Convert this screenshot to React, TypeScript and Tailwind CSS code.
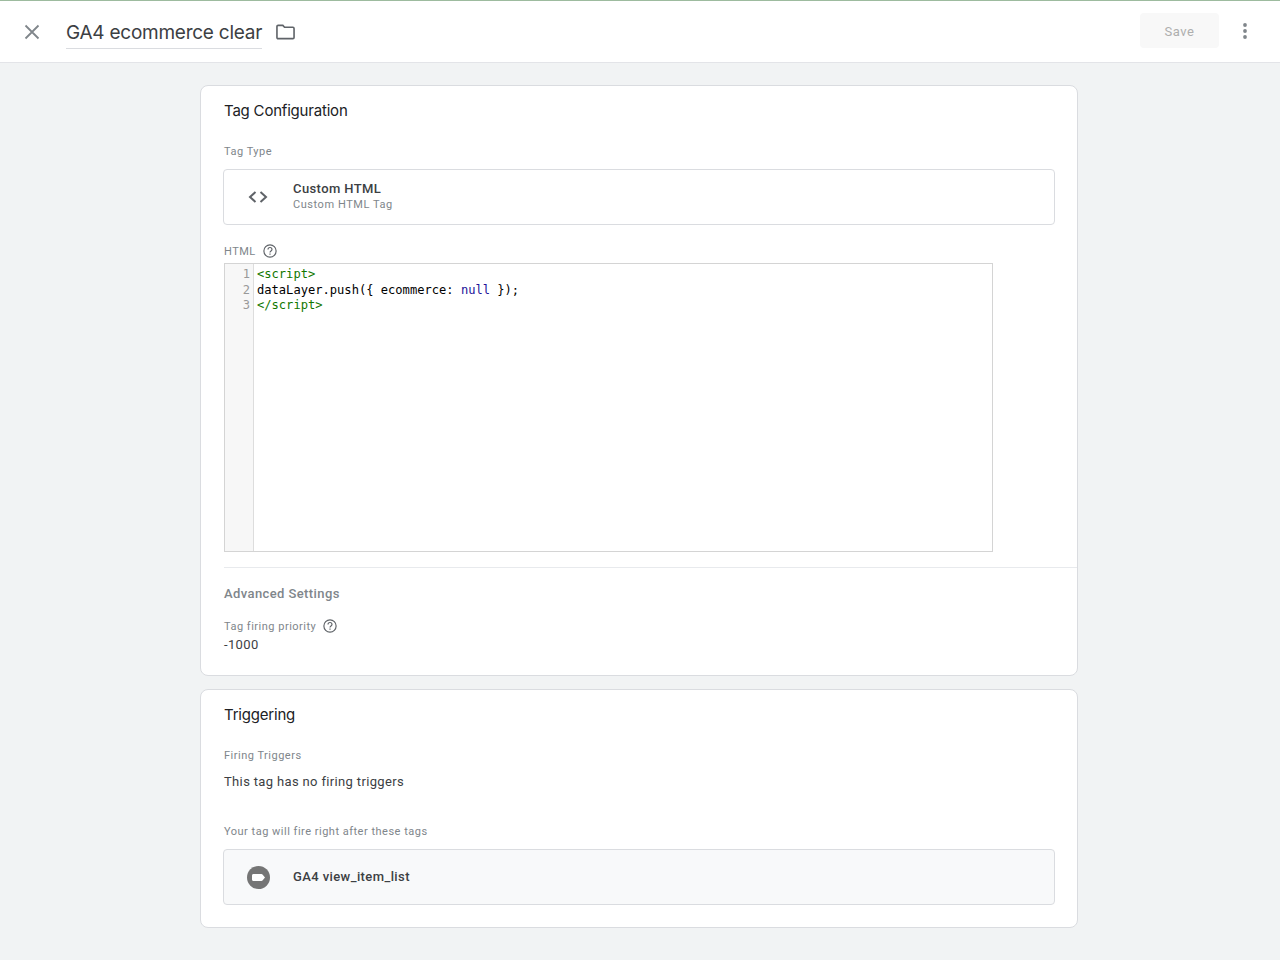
import React from "react";

const HelpIcon = () => (
  <svg width="14" height="14" viewBox="0 0 24 24" fill="none" stroke="#5f6368" strokeWidth="2">
    <circle cx="12" cy="12" r="10.5" />
    <path d="M8.6 9.4a3.4 3.4 0 0 1 6.8 0c0 2.4-3.4 2.6-3.4 5" strokeWidth="2" />
    <path d="M12 16.4v2.2" strokeWidth="2" />
  </svg>
);

const Label = ({ children }: { children: React.ReactNode }) => (
  <div className="h-[16px] pt-px text-[11px] leading-[16px] tracking-[0.5px] text-[#80868b]">{children}</div>
);

const App: React.FC = () => {
  return (
    <div className="h-[960px] overflow-hidden bg-[#f1f3f4] font-['Roboto',sans-serif] text-[#202124]">
      <header className="flex h-[63px] items-center border-t border-b border-t-[#9dbb9f] border-b-[#e3e4e8] bg-white">
        <button className="ml-[24px] flex h-[16px] w-[16px] items-center justify-center">
          <svg width="16" height="16" viewBox="0 0 16 16" fill="none" stroke="#80868b" strokeWidth="1.8">
            <path d="M1.5 1.5l13 13M14.5 1.5l-13 13" />
          </svg>
        </button>
        <div className="ml-[26px] flex h-[35px] items-center border-b border-[#dadce0] pt-[4px] font-['Inter',sans-serif] text-[#3c4043]">
          <span className="w-[196px] whitespace-nowrap text-[19px] tracking-[-0.25px]">GA4 ecommerce clear</span>
        </div>
        <svg className="ml-[14px]" width="19" height="16" viewBox="0 0 20 16" fill="none" stroke="#5f6368" strokeWidth="1.7">
          <path d="M1 2.200c0-.7.5-1.200 1.200-1.200h5l1.800 2h8.800c.7 0 1.200.5 1.200 1.200v9.600c0 .7-.5 1.200-1.200 1.200H2.200c-.7 0-1.200-.5-1.200-1.200z" />
        </svg>
        <button className="mb-[2px] ml-auto mr-[24px] h-[35px] w-[79px] rounded-[4px] bg-[#f8f8f8] pt-[2px] text-[13px] tracking-[0.5px] text-[#aeaeae]">
          Save
        </button>
        <svg className="mb-[2px] mr-[33px]" width="4" height="16" viewBox="0 0 4 16" fill="#80868b">
          <circle cx="2" cy="2" r="1.900" />
          <circle cx="2" cy="8" r="1.900" />
          <circle cx="2" cy="14" r="1.900" />
        </svg>
      </header>

      <main className="ml-[200px] flex w-[878px] flex-col gap-[13px] pt-[22px]">
        <section className="h-[591px] rounded-[8px] border border-[#dadce0] bg-white">
          <h2 className="px-[23px] pt-[13px] font-['Inter',sans-serif] text-[15px] leading-[24px] tracking-[-0.2px] text-[#202124]">
            Tag Configuration
          </h2>
          <div className="px-[23px] pt-[20px]">
            <Label>Tag Type</Label>
          </div>
          <div className="mx-[22px] mt-[10px] flex h-[56px] items-center rounded-[4px] border border-[#dadce0] bg-white">
            <svg className="ml-[24px]" width="20" height="14" viewBox="0 0 20 14" fill="none" stroke="#5f6368" strokeWidth="2">
              <path d="M7.500 2L2 7l5.500 5M12.500 2L18 7l-5.500 5" />
            </svg>
            <div className="ml-[25px]">
              <div className="text-[13px] leading-[16px] font-medium tracking-[0.4px] text-[#3c4043]">Custom HTML</div>
              <div className="text-[11px] leading-[16px] tracking-[0.55px] text-[#80868b]">Custom HTML Tag</div>
            </div>
          </div>

          <div className="flex items-center gap-[7px] px-[23px] pt-[18px]">
            <Label>HTML</Label>
            <HelpIcon />
          </div>
          <div className="mx-[23px] mt-[4px] flex h-[289px] w-[769px] border border-[#d4d4d4] bg-white font-['DejaVu_Sans_Mono',monospace] text-[12.100px] leading-[15.500px]">
            <div className="w-[29px] border-r border-[#dddddd] bg-[#f7f7f7] pt-[3.400px] pr-[3px] text-right text-[#999999]">
              <div>1</div>
              <div>2</div>
              <div>3</div>
            </div>
            <div className="pt-[3.400px] pl-[3px] whitespace-pre text-black">
              <div className="text-[#117700]">&lt;script&gt;</div>
              <div>
                dataLayer.push({"{"} ecommerce: <span className="text-[#221199]">null</span> {"}"});
              </div>
              <div className="text-[#117700]">&lt;/script&gt;</div>
            </div>
          </div>

          <div className="mt-[15px] ml-[23px] border-t border-[#e8eaed] pt-[18px]">
            <div className="text-[13px] leading-[16px] font-medium tracking-[0.4px] text-[#80868b]">Advanced Settings</div>
            <div className="mt-[16px] flex items-center gap-[7px]">
              <Label>Tag firing priority</Label>
              <HelpIcon />
            </div>
            <div className="mt-[1px] text-[13px] leading-[20px] tracking-[0.35px] text-[#3c4043]">-1000</div>
          </div>
        </section>

        <section className="h-[239px] rounded-[8px] border border-[#dadce0] bg-white">
          <h2 className="px-[23px] pt-[13px] font-['Inter',sans-serif] text-[15px] leading-[24px] tracking-[-0.2px] text-[#202124]">
            Triggering
          </h2>
          <div className="px-[23px] pt-[20px]">
            <Label>Firing Triggers</Label>
          </div>
          <div className="px-[23px] pt-[9px] text-[13px] leading-[20px] tracking-[0.35px] text-[#3c4043]">
            This tag has no firing triggers
          </div>
          <div className="px-[23px] pt-[31px]">
            <Label>Your tag will fire right after these tags</Label>
          </div>
          <div className="mx-[22px] mt-[10px] flex h-[56px] items-center rounded-[4px] border border-[#dadce0] bg-[#f8f9fa]">
            <svg className="ml-[23px]" width="23" height="23" viewBox="0 0 23 23">
              <circle cx="11.500" cy="11.500" r="11.500" fill="#757575" />
              <path d="M5 9.500c0-.8.600-1.500 1.500-1.500h8c.4 0 .8.200 1 .5l2.500 3-2.500 3c-.2.300-.6.500-1 .5h-8c-.9 0-1.500-.7-1.500-1.500z" fill="#fff" />
            </svg>
            <div className="ml-[23px] text-[13px] font-medium tracking-[0.4px] text-[#3c4043]">GA4 view_item_list</div>
          </div>
        </section>
      </main>
    </div>
  );
};

export default App;
